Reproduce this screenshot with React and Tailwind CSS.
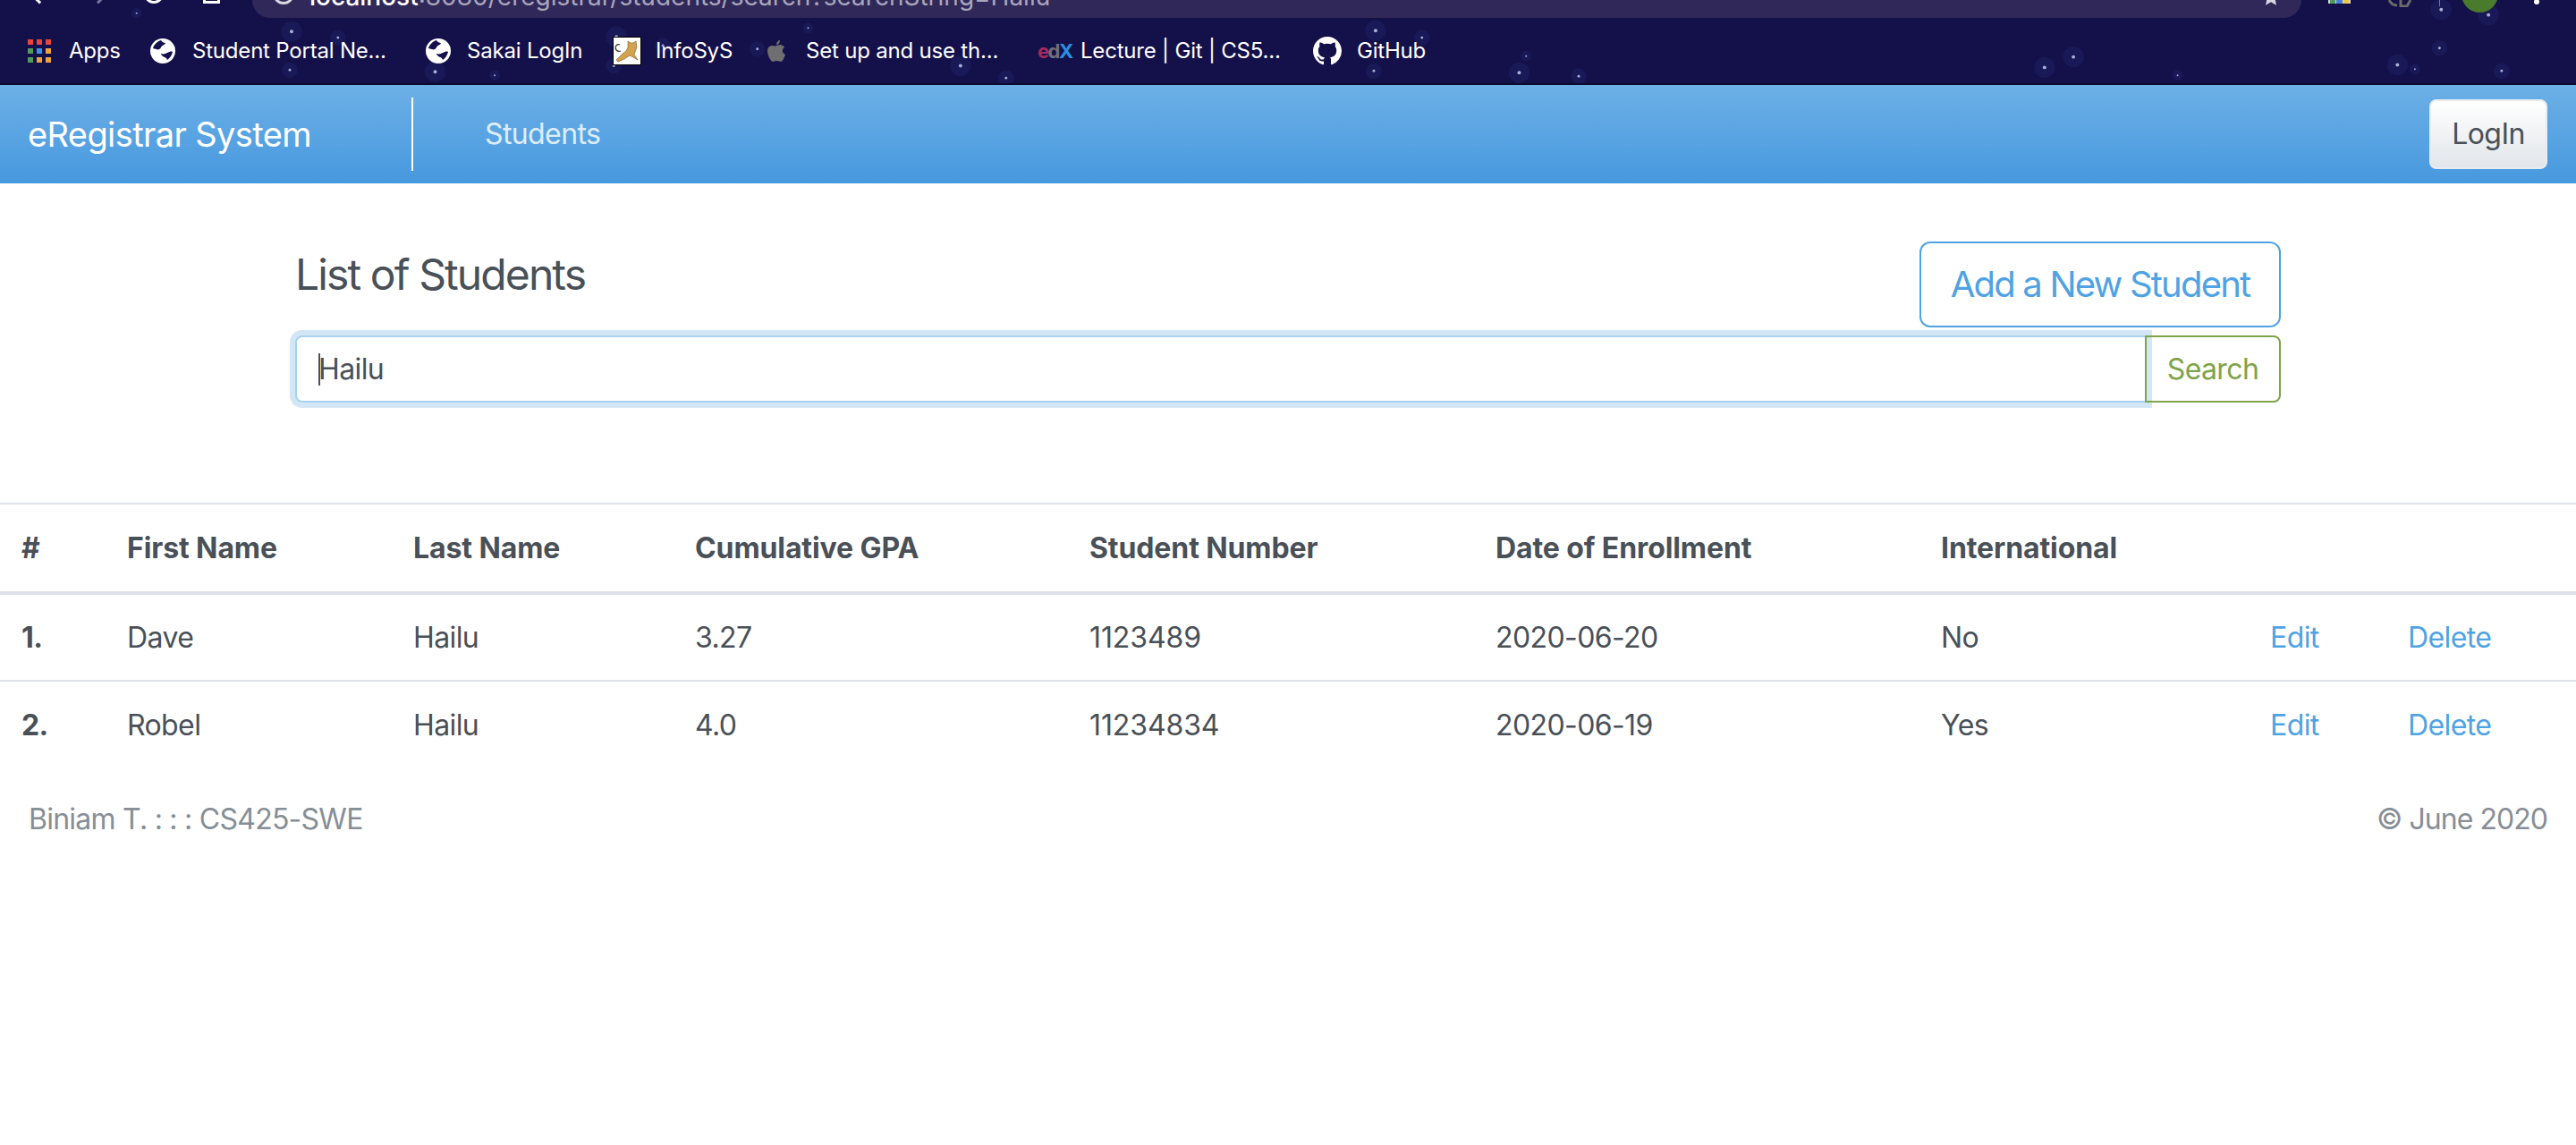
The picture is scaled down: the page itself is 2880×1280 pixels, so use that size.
import React from 'react';

const SANS = 'font-["Inter","Liberation_Sans",sans-serif]';

// star field of the browser theme: x, y, radius
const stars = [
  [302, 36, 2], [355, 43, 1.5], [300, 80, 1.5], [466, 82, 2], [534, 86, 1], [673, 42, 2], [670, 75, 1.5], [726, 52, 1.5],
  [834, 56, 1.5], [892, 32, 1], [1066, 75, 2], [1118, 89, 1.5], [1540, 35, 2], [1593, 43, 1.5], [1538, 81, 1.5],
  [1712, 64, 1], [1704, 83, 2], [1772, 87, 1.5], [2304, 77, 2], [2337, 65, 2], [2456, 86, 1], [2707, 74, 2],
  [2727, 79, 1], [2755, 55, 1.5], [2757, 11, 2], [2811, 17, 2], [2826, 81, 1.5], [125, 15, 1],
];

const Globe = () => (
  <svg viewBox="0 0 28 28" className="w-[28px] h-[28px] shrink-0">
    <circle cx="14" cy="14" r="14" fill="#fff" />
    <path d="M12 2c1 2 3 3 5 3-1 3-4 2-5 5-1 2-3 3-5 2-2 0-3-1-4-1 1-4 5-8 9-9zM12 17c3 1 5 0 7-1 2-1 5-2 6-1-1 4-3 7-6 9-1-3-3-3-5-4-1-1-2-2-2-3z" fill="#14104a" />
  </svg>
);

const AppsGrid = () => {
  const colors = ['#e8453c', '#e8453c', '#e8453c', '#4f9a5c', '#3f8fe8', '#eda23a', '#4f9a5c', '#eda23a', '#eda23a'];
  return (
    <div className="grid grid-cols-3 gap-[4px] w-[26px] shrink-0">
      {colors.map((c, i) => (
        <span key={i} className="w-[6px] h-[6px]" style={{ backgroundColor: c }} />
      ))}
    </div>
  );
};

const Tomcat = () => (
  <svg viewBox="0 0 32 32" className="w-[32px] h-[32px] shrink-0">
    <rect x="0.5" y="0.5" width="31" height="31" fill="#fff" stroke="#000" />
    <path d="M17 5l3 2h3l3-2 1 7-2 5-1 3 4 6-5-3-4-2-6 4-7 3-2-2 6-6 5-4 2-4z" fill="#d2a24e" stroke="#7a5a22" strokeWidth="0.6" />
    <path d="M3 13c0-4 3-5 5-4M3 13c1 3 3 4 6 3" fill="none" stroke="#333" strokeWidth="1.2" />
  </svg>
);

const AppleLogo = () => (
  <svg viewBox="0 0 20 24" className="w-[20px] h-[24px] shrink-0">
    <path d="M14 0c0 3-2 5-4 5 0-3 2-5 4-5zM10 6c1 0 3-1 4-1 2 0 4 1 5 3-3 2-3 6 1 8-1 3-3 8-5 8-1 0-2-1-5-1-2 0-3 1-4 1C4 24 0 17 0 12c0-4 3-6 5-6 2 0 4 1 5 0z" fill="#6f6f72" />
  </svg>
);

const EdxLogo = () => (
  <span className="flex items-baseline w-[32px] shrink-0 text-[22px] leading-none font-bold tracking-[-1.5px]">
    <span className="text-[#a82a5e]">e</span>
    <span className="text-[#6f6f78]">d</span>
    <span className="text-[#2a8fe0]">X</span>
  </span>
);

const GithubLogo = () => (
  <svg viewBox="0 0 16 16" className="w-[32px] h-[32px] shrink-0" fill="#fff">
    <path d="M8 0C3.58 0 0 3.58 0 8c0 3.54 2.29 6.53 5.47 7.59.4.07.55-.17.55-.38 0-.19-.01-.82-.01-1.49-2.01.37-2.53-.49-2.69-.94-.09-.23-.48-.94-.82-1.13-.28-.15-.68-.52-.01-.53.63-.01 1.08.58 1.23.82.72 1.21 1.87.87 2.33.66.07-.52.28-.87.51-1.07-1.78-.2-3.64-.89-3.64-3.95 0-.87.31-1.59.82-2.15-.08-.2-.36-1.02.08-2.12 0 0 .67-.21 2.2.82.64-.18 1.32-.27 2-.27s1.36.09 2 .27c1.53-1.04 2.2-.82 2.2-.82.44 1.1.16 1.92.08 2.12.51.56.82 1.27.82 2.15 0 3.07-1.87 3.75-3.65 3.95.29.25.54.73.54 1.48 0 1.07-.01 1.93-.01 2.2 0 .21.15.46.55.38A8.01 8.01 0 0016 8c0-4.42-3.58-8-8-8z" />
  </svg>
);

const bookmarks = [
  { icon: <AppsGrid />, label: 'Apps', gap: 'gap-[20px]', width: 'w-[137px]' },
  { icon: <Globe />, label: 'Student Portal Ne...', gap: 'gap-[19px]', width: 'w-[308px]' },
  { icon: <Globe />, label: 'Sakai LogIn', gap: 'gap-[18px]', width: 'w-[209px]' },
  { icon: <Tomcat />, label: 'InfoSyS', gap: 'gap-[16px]', width: 'w-[173px]' },
  { icon: <AppleLogo />, label: 'Set up and use th...', gap: 'gap-[23px]', width: 'w-[302px]' },
  { icon: <EdxLogo />, label: 'Lecture | Git | CS5...', gap: 'gap-[16px]', width: 'w-[308px]' },
  { icon: <GithubLogo />, label: 'GitHub', gap: 'gap-[17px]', width: '' },
];

const columns = [
  { label: '#', width: 'w-[118px]' },
  { label: 'First Name', width: 'w-[320px]' },
  { label: 'Last Name', width: 'w-[315px]' },
  { label: 'Cumulative GPA', width: 'w-[441px]' },
  { label: 'Student Number', width: 'w-[454px]' },
  { label: 'Date of Enrollment', width: 'w-[498px]' },
  { label: 'International', width: 'w-[369px]' },
  { label: '', width: 'w-[153px]' },
  { label: '', width: 'w-[212px]' },
];

const students = [
  { n: '1.', first: 'Dave', last: 'Hailu', gpa: '3.27', num: '1123489', date: '2020-06-20', intl: 'No' },
  { n: '2.', first: 'Robel', last: 'Hailu', gpa: '4.0', num: '11234834', date: '2020-06-19', intl: 'Yes' },
];

const ChromeBar = () => (
  <div className="relative h-[95px] bg-[#14104a] border-b-2 border-[#0c0930] overflow-hidden">
    <svg className="absolute inset-0 w-full h-full" viewBox="0 0 2880 95">
      {stars.map(([x, y, r], i) => (
        <g key={i}>
          <circle cx={x} cy={y} r={r * 6} fill="#24357a" opacity="0.25" />
          <circle cx={x} cy={y} r={r} fill="#a9add8" />
        </g>
      ))}
    </svg>
    <div className="relative h-[20px] flex">
      <div className="w-[282px] shrink-0 relative">
        <div className="absolute left-[38px] -top-[10px] w-[12px] h-[12px] border-l-[3px] border-b-[3px] border-white rotate-45" />
        <div className="absolute left-[104px] -top-[10px] w-[12px] h-[12px] border-r-[3px] border-b-[3px] border-[#77779a] -rotate-45" />
        <div className="absolute left-[161px] -top-[20px] w-[22px] h-[24px] rounded-full border-[3px] border-white" />
        <div className="absolute left-[227px] -top-[15px] w-[19px] h-[19px] border-[3px] border-white" />
      </div>
      <div className="w-[2291px] shrink-0 h-[20px] bg-[#302858] rounded-b-[24px] relative overflow-hidden">
        <div className="absolute left-[23px] -top-[19px] w-[24px] h-[24px] rounded-full border-[3px] border-[#d8d8e0]" />
        <p className={`absolute left-[64px] -top-[21px] text-[28px] leading-[34px] whitespace-nowrap text-[#a9a6bd] ${SANS}`}>
          <span className="text-white font-medium">localhost</span>:8080/eregistrar/students/search?searchString=Hailu
        </p>
        <svg viewBox="0 0 30 30" className="absolute right-[24px] -top-[13px] w-[20px] h-[20px]">
          <path d="M15 1l4.300 9.200 10 1.200-7.400 6.800 2 9.800-8.900-5-8.900 5 2-9.800L.7 11.400l10-1.200z" fill="#d8d8e0" />
        </svg>
      </div>
      <div className="flex-1 relative">
        <div className="absolute left-[30px] top-0 w-[25px] h-[4px] flex gap-[1px] bg-[#d8d8d8] px-[2px]">
          <span className="flex-1 bg-[#4f9a5c]" />
          <span className="flex-1 bg-[#4a7fd8]" />
          <span className="flex-1 bg-[#f0c64a]" />
        </div>
        <svg viewBox="0 0 26 8" className="absolute left-[97px] top-0 w-[26px] h-[8px]">
          <path d="M1 0c2 4 5 6 9 6M14 0v7h7l4-7" fill="none" stroke="#6a6a6a" strokeWidth="3" />
        </svg>
        <div className="absolute left-[154px] top-0 w-[1px] h-[7px] bg-[#77779a]" />
        <div className="absolute left-[179px] -top-[27px] w-[41px] h-[41px] rounded-full bg-[#4a7a2c]" />
        <div className="absolute left-[260px] -top-[1px] w-[6px] h-[6px] rounded-full bg-white" />
      </div>
    </div>
    <div className={`relative h-[73px] pl-[31px] flex items-center text-[24px] text-white ${SANS}`}>
      {bookmarks.map((b) => (
        <div key={b.label} className={`flex items-center ${b.gap} ${b.width} shrink-0`}>
          {b.icon}
          <span className="whitespace-nowrap tracking-[-0.2px]">{b.label}</span>
        </div>
      ))}
    </div>
  </div>
);

const Navbar = () => (
  <nav className="h-[110px] flex items-center justify-between pl-[31px] pr-[32px] bg-gradient-to-b from-[#6cb0e6] to-[#4698df]">
    <div className="flex items-center h-[82px]">
      <a className="w-[429px] text-[38px] tracking-[-0.6px] text-white">eRegistrar System</a>
      <div className="w-[2px] h-full bg-white" />
      <a className="ml-[80px] text-[32px] tracking-[-0.6px] text-white/80">Students</a>
    </div>
    <button className="w-[132px] h-[78px] rounded-[8px] border-2 border-[#e9ecef] bg-gradient-to-b from-white to-[#e2e6ea] text-[32px] tracking-[-0.6px] text-[#495057]">
      LogIn
    </button>
  </nav>
);

const SearchHeader = () => (
  <section className="w-[2220px] mx-auto pt-[65px]">
    <div className="flex justify-between items-start h-[105px]">
      <h3 className="pt-[8px] text-[48px] leading-[58px] tracking-[-1.9px] text-[#495057]">List of Students</h3>
      <button className="w-[404px] h-[96px] rounded-[12px] border-2 border-[#4fa3e3] text-[40px] tracking-[-1.8px] text-[#4fa3e3]">
        Add a New Student
      </button>
    </div>
    <div className="flex h-[75px]">
      <div className="flex-1 relative flex items-center pl-[24px] bg-white border-2 border-[#a8d2f0] rounded-l-[8px] shadow-[0_0_0_6px_#d2e6f6] text-[32px] tracking-[-0.6px] text-[#495057]">
        <span className="absolute left-[24px] top-[18px] w-[2px] h-[36px] bg-[#495057]" />
        Hailu
      </div>
      <button className="w-[152px] -ml-[2px] relative rounded-r-[8px] border-2 border-[#7ea44a] text-[32px] tracking-[-0.6px] text-[#7ea44a]">
        Search
      </button>
    </div>
  </section>
);

const StudentTable = () => (
  <table className="mt-[112px] w-full table-fixed border-collapse text-[32px] tracking-[-0.6px] text-[#495057]">
    <colgroup>
      {columns.map((c, i) => (
        <col key={i} className={c.width} />
      ))}
    </colgroup>
    <thead>
      <tr className="h-[100px] border-t-2 border-b-4 border-[#dee2e6]">
        {columns.map((c, i) => (
          <th key={i} className="pl-[24px] text-left font-bold tracking-[-0.1px]">{c.label}</th>
        ))}
      </tr>
    </thead>
    <tbody>
      {students.map((s) => (
        <tr key={s.n} className="h-[98px] first:border-b-2 border-[#dee2e6]">
          <td className="pl-[24px] font-bold">{s.n}</td>
          <td className="pl-[24px]">{s.first}</td>
          <td className="pl-[24px]">{s.last}</td>
          <td className="pl-[24px]">{s.gpa}</td>
          <td className="pl-[24px] tracking-[-0.1px]">{s.num}</td>
          <td className="pl-[24px]">{s.date}</td>
          <td className="pl-[24px]">{s.intl}</td>
          <td className="pl-[23px] text-[#4fa3e3]"><a>Edit</a></td>
          <td className="pl-[24px] text-[#4fa3e3]"><a>Delete</a></td>
        </tr>
      ))}
    </tbody>
  </table>
);

export default function App() {
  return (
    <div className={`min-h-[1280px] bg-white ${SANS}`}>
      <ChromeBar />
      <Navbar />
      <SearchHeader />
      <StudentTable />
      <footer className="flex justify-between px-[32px] pt-[33px] text-[32px] tracking-[-0.75px] text-[#868e96]">
        <span>Biniam T. : : : CS425-SWE</span>
        <span className="tracking-[-0.95px]">© June 2020</span>
      </footer>
    </div>
  );
}
